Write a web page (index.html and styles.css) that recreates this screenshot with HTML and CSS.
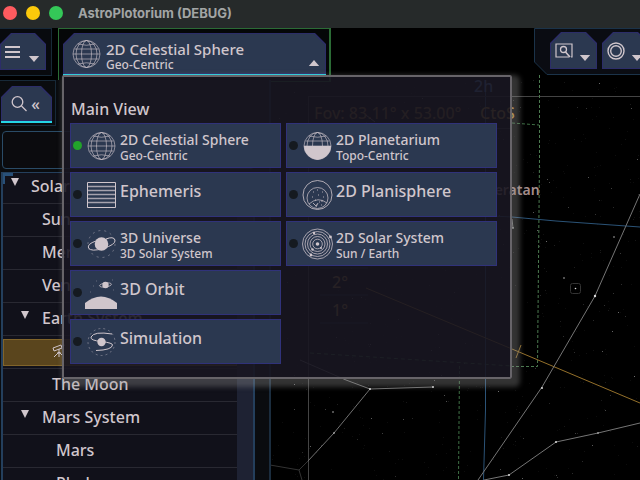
FILE: index.html
```html
<!DOCTYPE html>
<html lang="en">
<head>
<meta charset="utf-8">
<title>AstroPlotorium (DEBUG)</title>
<link rel="stylesheet" href="styles.css">
</head>
<body>
<svg class="defs" aria-hidden="true">
  <symbol id="globe" viewBox="0 0 34 44">
    <g fill="none" stroke="currentColor" stroke-width=".6">
      <circle cx="16.500" cy="22" r="13.5"/><ellipse cx="16.500" cy="22" rx="10.5" ry="13.5"/><ellipse cx="16.500" cy="22" rx="5" ry="13.5"/>
      <path d="M3 22h27M4.500 17h24M4.500 27h24M8 12q8.500 2.500 17 0M8 32q8.500-2.500 17 0"/>
    </g>
  </symbol>
  <symbol id="down" viewBox="0 0 12 7"><path d="M0 0h12L6 7z" fill="currentColor"/></symbol>
</svg>

<header class="titlebar">
  <span class="light red"></span><span class="light yellow"></span><span class="light green"></span>
  <h1>AstroPlotorium (DEBUG)</h1>
</header>

<main class="app">
  <svg class="sky" viewBox="0 28 640 452" preserveAspectRatio="xMidYMid slice" aria-hidden="true">
    <g id="stars"></g>
    <g fill="none">
      <path d="M308.500 480V96.500H640" stroke="#444"/>
      <path d="M539.500 75V160L537.500 366.500H512" stroke="#4c7a50" stroke-dasharray="3 2"/>
      <path d="M459.500 366L458.500 480M512 123L539 125M566 103" stroke="#3f7045" stroke-dasharray="3 2"/>
      <path d="M310 353L512 366" stroke="#3f7045" stroke-dasharray="4 3"/>
      <path d="M310 207L512 217L556 221L640 227" stroke="#2b5377"/>
      <path d="M485.500 80V410L483.500 480" stroke="#2b5377"/>
      <path d="M366 288L512 349L640 403M516 358L521 345" stroke="#94702a"/>
      <path d="M640 194L595 296L542 387L478 480M484 480L509 475L556 442L598 433L640 423" stroke="#757575"/>
      <path d="M300 360L346 380L370 389L433 387M370 389L334 433L308 461" stroke="#707070"/>
      <path d="M308 461L299 470L302 480M299 470L270 465" stroke="#333"/>
      <path d="M366 115L375 122M512 219L513 228" stroke="#777"/>
      <rect x="570.500" y="283.500" width="10" height="10" rx="2" stroke="#333"/>
      <rect x="308.500" y="96.500" width="202" height="32" stroke="#333"/>
      <path d="M320 268h48M320 295h48M320 323h48" stroke="#1d2c44"/>
    </g>
    <g fill="#ddd">
      <circle cx="595" cy="296" r="1.200"/><circle cx="542" cy="388" r="1"/><circle cx="370" cy="389" r="1"/><circle cx="433" cy="387" r="1"/><circle cx="556" cy="442" r="1"/><circle cx="509" cy="475" r="1"/><circle cx="598" cy="433" r=".8"/><circle cx="575.500" cy="288.500" r=".8"/><circle cx="513" cy="228" r=".8"/><circle cx="334" cy="433" r=".8"/><circle cx="614" cy="237" r=".7"/><circle cx="564" cy="278" r=".7"/><circle cx="333" cy="412" r=".7"/>
    </g>
    <g class="sky-text">
      <text x="314" y="119" fill="#87662e">Fov: 83.11° x 53.00°</text>
      <text x="480" y="119" fill="#b58a3a">CtoS</text>
      <text x="474" y="92" fill="#5a86c0">2h</text>
      <text x="332" y="288" fill="#a88040">2°</text>
      <text x="332" y="316" fill="#a88040">1°</text>
      <text class="star-name" x="478" y="195" fill="#a58d8b">Sheratan</text>
    </g>
  </svg>

  <div class="topbar">
    <div class="menu-panel">
      <button class="chamfer tool menu-button" aria-label="Menu">
        <svg width="16" height="14" viewBox="0 0 16 14"><path d="M0 2h15M0 7h15M0 12h15" stroke="currentColor" stroke-width="2"/></svg>
        <svg class="caret" width="12" height="6"><use href="#down"/></svg>
      </button>
    </div>
    <div class="view-panel">
      <button class="chamfer view-button" aria-haspopup="menu" aria-expanded="true">
        <svg class="icon" viewBox="0 0 34 44"><use href="#globe"/></svg>
        <span class="label"><span class="name">2D Celestial Sphere</span><span class="sub">Geo-Centric</span></span>
        <svg class="caret up" width="12" height="6"><use href="#down"/></svg>
      </button>
    </div>
    <div class="tool-panel">
      <svg class="tool-frame" viewBox="0 0 112 48" aria-hidden="true"><path d="M.5.5H112V46.500H13L.5 34z" fill="#0a0c12" stroke="#1b3349"/></svg>
      <button class="chamfer tool" aria-label="Zoom view">
        <svg width="18" height="15" viewBox="0 0 18 15" fill="none" stroke="currentColor"><path d="M14 14H1V1h16v13h-1" stroke-width="1.200"/><circle cx="8.500" cy="6.500" r="3" stroke-width="1.300"/><path d="M10.500 9l4.500 5" stroke-width="1.600"/></svg>
        <svg class="caret" width="12" height="6"><use href="#down"/></svg>
      </button>
      <button class="chamfer tool" aria-label="Rings">
        <svg width="18" height="18" viewBox="0 0 18 18" fill="none" stroke="currentColor" stroke-width="1.400"><circle cx="9" cy="9" r="8"/><circle cx="9" cy="9" r="5.300"/></svg>
        <svg class="caret" width="12" height="6"><use href="#down"/></svg>
      </button>
    </div>
  </div>

  <aside class="sidebar">
    <div class="search-tab">
      <button class="chamfer search-button" aria-label="Search panel">
        <svg width="16" height="16" viewBox="0 0 16 16" fill="none" stroke="currentColor" stroke-width="1.300"><circle cx="6.500" cy="6" r="5.300"/><path d="M10.500 10l5 5"/></svg>
        <span>«</span>
      </button>
    </div>
    <input class="search" type="search" aria-label="Search objects">
    <div class="tree-wrap">
      <ul class="tree">
        <li class="top open">Solar System</li>
        <li class="child">Sun</li>
        <li class="child">Mercury</li>
        <li class="child">Venus</li>
        <li class="child open">Earth System</li>
        <li class="moon selected"><svg width="14" height="14" viewBox="0 0 14 14" fill="none" stroke="currentColor"><path d="M1 4l8-3 1 3-8 3zM10 2l3-1M7 5v3M7 8l-5 5M7 8v5M7 8l5 5M5 9h4"/></svg>Earth</li>
        <li class="moon">The Moon</li>
        <li class="child open">Mars System</li>
        <li class="planet">Mars</li>
        <li class="planet">Phobos</li>
      </ul>
      <div class="scroll"></div>
    </div>
  </aside>

  <section class="popup" aria-labelledby="popup-title">
    <h2 id="popup-title">Main View</h2>
    <div class="views">
      <button class="view active"><i class="dot"></i><svg class="icon" viewBox="0 0 34 44"><use href="#globe"/></svg><span class="label"><span class="name">2D Celestial Sphere</span><span class="sub">Geo-Centric</span></span></button>
      <button class="view"><i class="dot"></i><svg class="icon" viewBox="0 0 34 44"><use href="#globe"/><path d="M3 22a13.500 13.500 0 0 0 27 0z" fill="currentColor"/></svg><span class="label"><span class="name">2D Planetarium</span><span class="sub">Topo-Centric</span></span></button>
      <button class="view"><i class="dot"></i><svg class="icon" viewBox="0 0 34 44" fill="none" stroke="currentColor"><path d="M2.500 9.500h28v25h-28z"/><path d="M3 13.500h27M3 17.500h27M3 21.500h27M3 25.500h27M3 29.500h27" stroke-width="1.300" opacity=".75"/></svg><span class="label"><span class="title">Ephemeris</span></span></button>
      <button class="view"><i class="dot"></i><svg class="icon" viewBox="0 0 34 44" fill="none" stroke="currentColor"><circle cx="16.500" cy="22" r="14.500" stroke-width=".8"/><circle cx="16.500" cy="25" r="10.500" stroke-width=".7"/><path d="M8 31q9-8 18-1" stroke-width=".7"/><path d="M12 19h1M16 17h1M21 19h1M17 22h1M11 24h1M22 24h1M14 27h1M18 29h1M15 32h1M20 32h1M17 30l-2 4M12 30l3 3M21 27v2" stroke-width=".8"/></svg><span class="label"><span class="title">2D Planisphere</span></span></button>
      <button class="view"><i class="dot"></i><svg class="icon" viewBox="0 0 34 44" fill="none" stroke="currentColor"><circle cx="16.500" cy="22" r="13.500" stroke-width=".7" stroke-dasharray="2 4" opacity=".6"/><circle cx="16.500" cy="22" r="6.800" fill="currentColor" stroke="none"/><path d="M11 19Q2 22 3.500 26Q6 30 18 26.500Q31 22.500 30 18Q28.500 14 21 17" stroke-width="1"/></svg><span class="label"><span class="name">3D Universe</span><span class="sub">3D Solar System</span></span></button>
      <button class="view"><i class="dot"></i><svg class="icon" viewBox="0 0 34 44" fill="none" stroke="currentColor" stroke-width=".75"><circle cx="16.500" cy="22" r="15"/><circle cx="16.500" cy="22" r="12.500"/><circle cx="16.500" cy="22" r="10"/><circle cx="16.500" cy="22" r="7.500"/><circle cx="16.500" cy="22" r="4.800"/><g fill="currentColor" stroke="none"><circle cx="16.500" cy="22" r="1.800"/><circle cx="29.500" cy="15" r="1.400"/><circle cx="13" cy="11" r="1.200"/><circle cx="10" cy="33" r="1.400"/><circle cx="11.500" cy="27.500" r="1.200"/><circle cx="20" cy="26" r="1"/></g></svg><span class="label"><span class="name">2D Solar System</span><span class="sub">Sun / Earth</span></span></button>
      <button class="view"><i class="dot"></i><svg class="icon" viewBox="0 0 34 44"><path d="M0 38v-6q16-13 32 0v6z" fill="currentColor"/><circle cx="20.500" cy="14" r="3.200" fill="currentColor"/><ellipse cx="20.500" cy="14" rx="6" ry="2" fill="none" stroke="currentColor" stroke-width=".7" transform="rotate(-8 20.500 14)"/><path d="M5 21l1 0M8 15h1M27 9h1M28 19h1M11 10h1" stroke="currentColor" opacity=".35"/></svg><span class="label"><span class="title">3D Orbit</span></span></button>
      <button class="view last"><i class="dot"></i><svg class="icon" viewBox="0 0 34 44" fill="none" stroke="currentColor"><circle cx="16.500" cy="22" r="13.500" stroke-width=".7" stroke-dasharray="2 3" opacity=".6"/><circle cx="16.500" cy="22" r="4.200" fill="currentColor" stroke="none"/><path d="M27 14Q9 11 6 17Q5 20.500 16.500 21.500Q28 23 27.500 25Q27 30 11 30.500" stroke-width="1"/></svg><span class="label"><span class="title">Simulation</span></span></button>
    </div>
  </section>
</main>
<script src="stars.js"></script>
</body>
</html>
```
FILE: styles.css
```css
* { box-sizing: border-box; }

:root {
  --ink: #d0c6cc;
  --button: #2b3850;
  --edge: #2c2d69;
  --cyan: #25d5e5;
}

body {
  margin: 0;
  height: 100vh;
  display: flex;
  flex-direction: column;
  overflow: hidden;
  background: #000;
  color: var(--ink);
  font: 500 16px/22px "Noto Sans", sans-serif;
}

button { font: inherit; color: inherit; border: 0; padding: 0; text-align: left; }
svg { display: block; flex: none; }
.defs { position: absolute; width: 0; height: 0; }

.titlebar {
  flex: none;
  display: flex;
  align-items: center;
  height: 28px;
  padding: 0 3px 3px;
  gap: 9px;
  background: #262a2a;
}
.titlebar h1 { margin: 0 0 0 6px; font: 700 13px/20px Inter, sans-serif; color: #a2a5a5; }
.light { width: 14px; height: 14px; border-radius: 50%; }
.red { background: #fe5b5f; }
.yellow { background: #fcc90b; }
.green { background: #34c858; }

.app { position: relative; flex: 1; min-height: 0; display: flex; flex-direction: column; overflow: hidden; }
.sky { position: absolute; inset: 0; width: 100%; height: 100%; }
.sky-text { font-size: 16px; }
.star-name { font-size: 14px; font-weight: 600; }

.topbar { position: relative; flex: none; display: flex; align-items: flex-start; height: 52px; }
.menu-panel {
  width: 52px;
  height: 48px;
  padding-top: 4px;
  border: 1px solid #172938;
  border-left: 0;
  background: #080a0e;
}
.view-panel {
  width: 273px;
  height: 54px;
  margin-left: 6px;
  padding: 4px 4px 0;
  border: 1px solid #2b6b35;
  border-right-width: 2px;
  background: #050708;
}
.tool-panel {
  position: relative;
  flex: none;
  display: flex;
  gap: 5px;
  width: 106px;
  margin-left: auto;
  padding: 4px 0 0 16px;
}
.tool-frame { position: absolute; left: 0; top: 0; width: 112px; height: 48px; }

.chamfer {
  --cut: 11px;
  position: relative;
  z-index: 0;
  display: flex;
  flex: none;
  background: var(--edge);
  clip-path: polygon(var(--cut) 0, calc(100% - var(--cut)) 0, 100% var(--cut), 100% 100%, 0 100%, 0 var(--cut));
}
.chamfer::before {
  content: "";
  position: absolute;
  z-index: -1;
  inset: 1px;
  background: var(--button);
  clip-path: polygon(var(--cut) 0, calc(100% - var(--cut)) 0, 100% var(--cut), 100% 100%, 0 100%, 0 var(--cut));
}
.tool { width: 47px; height: 37px; padding: 0 6px 0 5px; align-items: center; justify-content: space-between; }
.caret { align-self: flex-end; margin-bottom: 8px; }
.up { transform: scaleY(-1); }
.menu-button { width: 46px; }

.view-button {
  width: 263px;
  height: 43px;
  padding: 0 6px 0 7px;
  border-bottom: 2px solid var(--cyan);
}
.view-button .icon { margin-top: -1px; }
.view-button .label { flex: 1; padding: 7px 0 0 2px; }
.view-button .name { font-size: 15px; }

.icon { width: 34px; height: 44px; }
.label { display: flex; flex-direction: column; }
.name { font-size: 14px; line-height: 18px; }
.sub { font-size: 12px; line-height: 13px; }
.title { font-size: 16px; line-height: 20px; }

.sidebar {
  position: relative;
  flex: 1;
  min-height: 0;
  display: flex;
  flex-direction: column;
  width: 271px;
  border-right: 2px solid #1b2d3e;
  background: #0a0c0f;
}
.search-tab { flex: none; width: 56px; height: 46px; padding: 5px 0 0 1px; border: 1px solid #172938; border-left: 0; }
.search-button {
  width: 51px;
  height: 37px;
  padding: 0 12px 0 10px;
  align-items: center;
  justify-content: space-between;
  border-bottom: 2px solid var(--cyan);
}
.search {
  flex: none;
  height: 38px;
  margin: 5px 14px 3px 2px;
  border: 1px solid #2a4b66;
  border-radius: 4px;
  background: #0b0b0e;
  color: inherit;
}
.tree-wrap { position: relative; flex: 1; min-height: 0; display: flex; margin: 0 14px 0 1px; border: solid #243f5c; border-width: 1px 2px 0; overflow: hidden; }
.tree-wrap::before { content: ""; position: absolute; width: 8px; height: 8px; left: -1px; top: 0; border: solid #285078; border-width: 3px 0 0 3px; }
.tree { flex: 1; margin: 0; padding: 0; list-style: none; background: #11111a; }
.tree li {
  position: relative;
  display: flex;
  gap: 4px;
  height: 33px;
  padding-top: 4px;
  border-bottom: 1px solid #292932;
}
.tree .top { height: 31px; padding-top: 2px; padding-left: 28px; }
.tree .child { padding-left: 39px; }
.tree .moon { padding-left: 49px; }
.tree .planet { padding-left: 53px; }
.open::before {
  content: "";
  position: absolute;
  left: 18px;
  top: 8px;
  border: solid transparent;
  border-width: 8px 4px 0;
  border-top-color: var(--ink);
}
.top.open::before { left: 8px; top: 5px; }
.selected::after { content: ""; position: absolute; inset: 3px 0 2px; border: 1px solid #81642a; background: #5a451d; z-index: -1; }
.tree .selected { z-index: 0; }
.selected svg { margin-top: 4px; }
.scroll { width: 16px; background: #1e2233; }

.popup {
  position: absolute;
  left: 62px;
  top: 47px;
  width: 450px;
  padding: 21px 13px 13px 6px;
  border: 2px solid #676469;
  border-radius: 2px;
  background: rgba(24, 22, 33, .9);
  box-shadow: 4px 4px 5px 4px rgba(150, 150, 150, .34);
}
.popup h2 { margin: 0 1px 3px; font: inherit; }
.views { display: grid; grid-template-columns: 1fr 1fr; gap: 4px 5px; }
.view {
  display: flex;
  height: 45px;
  align-items: flex-start;
  border: 1px solid #30327a;
  background: var(--button);
}
.view.last, .view:nth-child(7) { grid-column: 1; }
.view .label { padding: 7px 0 0 1px; }
.view .title { padding-top: 1px; }
.dot { width: 9px; height: 9px; margin: 17px 3px 0 2px; border-radius: 50%; background: #151a20; }
.active .dot { background: #22a32a; }
```
FILE: stars.js
```js
// Scatter faint background stars with a fixed seed so the field is stable.
const field = document.getElementById('stars');
let seed = 42;
const rnd = () => (seed = (seed * 16807) % 2147483647) / 2147483647;
for (let i = 0; i < 700; i++) {
  const star = document.createElementNS('http://www.w3.org/2000/svg', 'rect');
  star.setAttribute('x', Math.floor(272 + rnd() * 368));
  star.setAttribute('y', Math.floor(80 + rnd() * 400));
  star.setAttribute('width', 1);
  star.setAttribute('height', 1);
  star.setAttribute('fill', '#ccc');
  star.setAttribute('opacity', (0.06 + Math.pow(rnd(), 8) * 0.5).toFixed(2));
  field.appendChild(star);
}
```
